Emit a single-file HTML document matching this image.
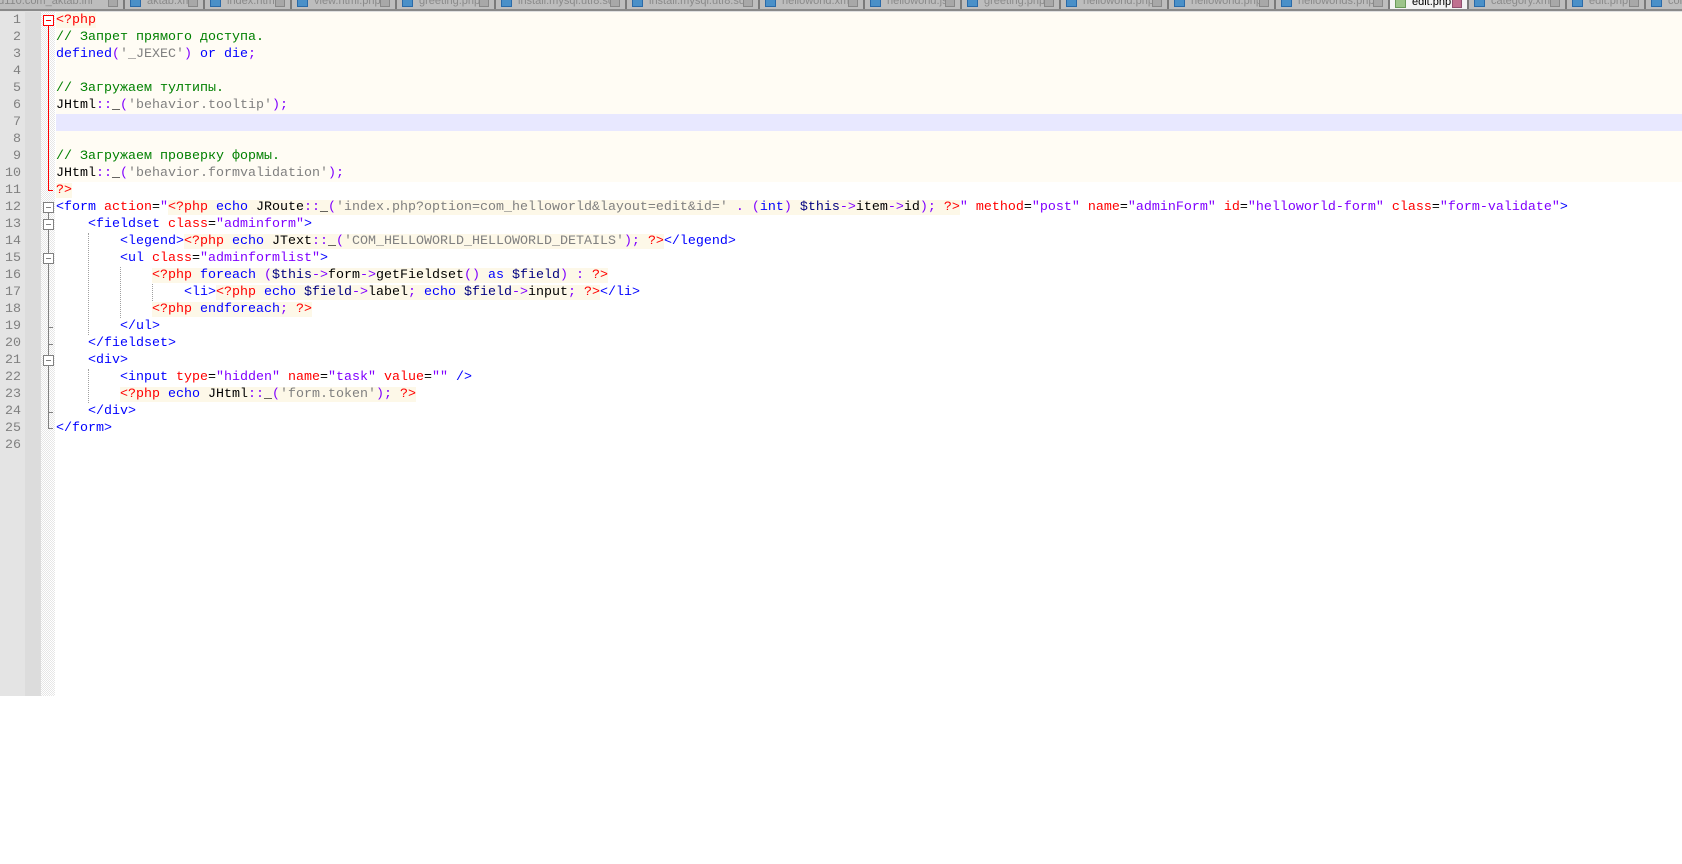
<!DOCTYPE html>
<html><head><meta charset="utf-8">
<style>
html,body{margin:0;padding:0;background:#fff;width:1682px;height:864px;overflow:hidden;position:relative}
#tabs{position:absolute;left:0;top:0;width:1682px;height:9px;background:#c4c4c4;overflow:hidden}
.tab{position:absolute;top:-6px;height:15px;background:#bdbdbd;border-right:2px solid #7a7a7a;font:11px "Liberation Sans",sans-serif;color:#8a8a8a;white-space:nowrap;overflow:hidden;box-sizing:border-box;padding-left:22px;line-height:14px}
.tab:before{content:"";position:absolute;left:5px;top:2px;width:11px;height:11px;background:#4a90c8;border:1px solid #2a6aa8;box-sizing:border-box}
.tab:after{content:"";position:absolute;right:5px;top:4px;width:10px;height:9px;background:#a8a8a8;border:1px solid #888;box-sizing:border-box}
.tab.act{background:#f4f4f4;color:#000;top:-5px}
.tab.act:before{background:#9cc48a;border-color:#6a9a5a}
.tab.act:after{background:#c07090;border-color:#905070}
#bar{position:absolute;left:0;top:9px;width:1682px;height:2px;background:#8a8a8a}
#bar2{position:absolute;left:0;top:11px;width:1682px;height:1px;background:#e0e0e0}
#g1{position:absolute;left:0;top:12px;width:25px;height:684px;background:#e4e4e4}
#g2{position:absolute;left:25px;top:12px;width:16px;height:684px;background:#dcdcdc}
#g3{position:absolute;left:41px;top:12px;width:14px;height:684px;background-color:#fff;background-image:conic-gradient(#e6e6e6 25%,#fff 0 50%,#e6e6e6 0 75%,#fff 0);background-size:2px 2px}
#cream{position:absolute;left:56px;top:12px;width:1626px;height:170px;background:#fffcf4}
#cur{position:absolute;left:56px;top:114px;width:1626px;height:17px;background:#e8e8ff}
.ln{position:absolute;left:0;width:21px;text-align:right;font:13.33px/17px "Liberation Mono",monospace;color:#808080}
#code{position:absolute;left:56px;top:12px;font:13.33px/17px "Liberation Mono",monospace;color:#000}
#code div{height:17px;white-space:pre}
.c{color:#008000}.k{color:#0000ff}.s{color:#808080}.o{color:#8000ff}.v{color:#000080}
.t{color:#ff0000;background:#fdf8e8}.tg{color:#0000ff}.a{color:#ff0000}.av{color:#8000ff}
.pb{background:#fdf8e8}
.box{position:absolute;left:43px;width:9px;height:9px;border:1px solid #808080;background:#fff;box-sizing:content-box}
.box:after{content:"";position:absolute;left:2px;top:4px;width:5px;height:1px;background:#808080}
.box.r{border-color:#ff0000}.box.r:after{background:#ff0000}
.vl{position:absolute;width:1px;background:#808080}
.tk{position:absolute;height:1px;width:5px;background:#808080}
.dg{position:absolute;width:0;border-left:1px dotted #a0a0a0}
</style></head><body>
<div id="tabs">
<div class="tab" style="left:-30px;width:155px">rld110.com_aktab.ini</div>
<div class="tab" style="left:125px;width:80px">aktab.xml</div>
<div class="tab" style="left:205px;width:87px">index.html</div>
<div class="tab" style="left:292px;width:105px">view.html.php</div>
<div class="tab" style="left:397px;width:99px">greeting.php</div>
<div class="tab" style="left:496px;width:131px">install.mysql.utf8.sql</div>
<div class="tab" style="left:627px;width:133px">install.mysql.utf8.sql</div>
<div class="tab" style="left:760px;width:105px">helloworld.xml</div>
<div class="tab" style="left:865px;width:97px">helloworld.js</div>
<div class="tab" style="left:962px;width:99px">greeting.php</div>
<div class="tab" style="left:1061px;width:108px">helloworld.php</div>
<div class="tab" style="left:1169px;width:107px">helloworld.php</div>
<div class="tab" style="left:1276px;width:114px">helloworlds.php</div>
<div class="tab act" style="left:1390px;width:79px">edit.php</div>
<div class="tab" style="left:1469px;width:98px">category.xml</div>
<div class="tab" style="left:1567px;width:79px">edit.php</div>
<div class="tab" style="left:1646px;width:60px">config</div>
</div>
<div id="bar"></div><div id="bar2"></div>
<div id="g1"></div><div id="g2"></div><div id="g3"></div>
<div id="cream"></div><div id="cur"></div>

<div class="ln" style="top:12px">1</div><div class="ln" style="top:29px">2</div><div class="ln" style="top:46px">3</div><div class="ln" style="top:63px">4</div><div class="ln" style="top:80px">5</div><div class="ln" style="top:97px">6</div><div class="ln" style="top:114px">7</div><div class="ln" style="top:131px">8</div><div class="ln" style="top:148px">9</div><div class="ln" style="top:165px">10</div><div class="ln" style="top:182px">11</div><div class="ln" style="top:199px">12</div><div class="ln" style="top:216px">13</div><div class="ln" style="top:233px">14</div><div class="ln" style="top:250px">15</div><div class="ln" style="top:267px">16</div><div class="ln" style="top:284px">17</div><div class="ln" style="top:301px">18</div><div class="ln" style="top:318px">19</div><div class="ln" style="top:335px">20</div><div class="ln" style="top:352px">21</div><div class="ln" style="top:369px">22</div><div class="ln" style="top:386px">23</div><div class="ln" style="top:403px">24</div><div class="ln" style="top:420px">25</div><div class="ln" style="top:437px">26</div>

<div class="vl" style="left:48px;top:25px;height:166px;background:#ff0000"></div>
<div class="tk" style="left:48px;top:190px;background:#ff0000"></div>
<div class="box r" style="top:15px"></div>
<div class="vl" style="left:48px;top:212px;height:216px"></div>
<div class="tk" style="left:48px;top:327px"></div>
<div class="tk" style="left:48px;top:344px"></div>
<div class="tk" style="left:48px;top:412px"></div>
<div class="tk" style="left:48px;top:428px"></div>
<div class="box" style="top:202px"></div>
<div class="box" style="top:219px"></div>
<div class="box" style="top:253px"></div>
<div class="box" style="top:355px"></div>

<div class="dg" style="left:88px;top:233px;height:102px"></div>
<div class="dg" style="left:88px;top:369px;height:34px"></div>
<div class="dg" style="left:120px;top:267px;height:51px"></div>
<div class="dg" style="left:152px;top:284px;height:17px"></div>

<div id="code"><div><span class="t">&lt;?php</span></div><div><span class="c">// Запрет прямого доступа.</span></div><div><span class="k">defined</span><span class="o">(</span><span class="s">'_JEXEC'</span><span class="o">)</span> <span class="k">or</span> <span class="k">die</span><span class="o">;</span></div><div></div><div><span class="c">// Загружаем тултипы.</span></div><div>JHtml<span class="o">::</span>_<span class="o">(</span><span class="s">'behavior.tooltip'</span><span class="o">);</span></div><div></div><div></div><div><span class="c">// Загружаем проверку формы.</span></div><div>JHtml<span class="o">::</span>_<span class="o">(</span><span class="s">'behavior.formvalidation'</span><span class="o">);</span></div><div><span class="t">?&gt;</span></div><div><span class="tg">&lt;form</span> <span class="a">action</span>=<span class="av">"</span><span class="t">&lt;?php</span><span class="pb"> <span class="k">echo</span> JRoute<span class="o">::</span>_<span class="o">(</span><span class="s">'index.php?option=com_helloworld&amp;layout=edit&amp;id='</span> <span class="o">.</span> <span class="o">(</span><span class="k">int</span><span class="o">)</span> <span class="v">$this</span><span class="o">-&gt;</span>item<span class="o">-&gt;</span>id<span class="o">);</span> </span><span class="t">?&gt;</span><span class="av">"</span> <span class="a">method</span>=<span class="av">"post"</span> <span class="a">name</span>=<span class="av">"adminForm"</span> <span class="a">id</span>=<span class="av">"helloworld-form"</span> <span class="a">class</span>=<span class="av">"form-validate"</span><span class="tg">&gt;</span></div><div>    <span class="tg">&lt;fieldset</span> <span class="a">class</span>=<span class="av">"adminform"</span><span class="tg">&gt;</span></div><div>        <span class="tg">&lt;legend&gt;</span><span class="t">&lt;?php</span><span class="pb"> <span class="k">echo</span> JText<span class="o">::</span>_<span class="o">(</span><span class="s">'COM_HELLOWORLD_HELLOWORLD_DETAILS'</span><span class="o">);</span> </span><span class="t">?&gt;</span><span class="tg">&lt;/legend&gt;</span></div><div>        <span class="tg">&lt;ul</span> <span class="a">class</span>=<span class="av">"adminformlist"</span><span class="tg">&gt;</span></div><div>            <span class="t">&lt;?php</span><span class="pb"> <span class="k">foreach</span> <span class="o">(</span><span class="v">$this</span><span class="o">-&gt;</span>form<span class="o">-&gt;</span>getFieldset<span class="o">()</span> <span class="k">as</span> <span class="v">$field</span><span class="o">)</span> <span class="o">:</span> </span><span class="t">?&gt;</span></div><div>                <span class="tg">&lt;li&gt;</span><span class="t">&lt;?php</span><span class="pb"> <span class="k">echo</span> <span class="v">$field</span><span class="o">-&gt;</span>label<span class="o">;</span> <span class="k">echo</span> <span class="v">$field</span><span class="o">-&gt;</span>input<span class="o">;</span> </span><span class="t">?&gt;</span><span class="tg">&lt;/li&gt;</span></div><div>            <span class="t">&lt;?php</span><span class="pb"> <span class="k">endforeach</span><span class="o">;</span> </span><span class="t">?&gt;</span></div><div>        <span class="tg">&lt;/ul&gt;</span></div><div>    <span class="tg">&lt;/fieldset&gt;</span></div><div>    <span class="tg">&lt;div&gt;</span></div><div>        <span class="tg">&lt;input</span> <span class="a">type</span>=<span class="av">"hidden"</span> <span class="a">name</span>=<span class="av">"task"</span> <span class="a">value</span>=<span class="av">""</span> <span class="tg">/&gt;</span></div><div>        <span class="t">&lt;?php</span><span class="pb"> <span class="k">echo</span> JHtml<span class="o">::</span>_<span class="o">(</span><span class="s">'form.token'</span><span class="o">);</span> </span><span class="t">?&gt;</span></div><div>    <span class="tg">&lt;/div&gt;</span></div><div><span class="tg">&lt;/form&gt;</span></div><div></div></div>
</body></html>
